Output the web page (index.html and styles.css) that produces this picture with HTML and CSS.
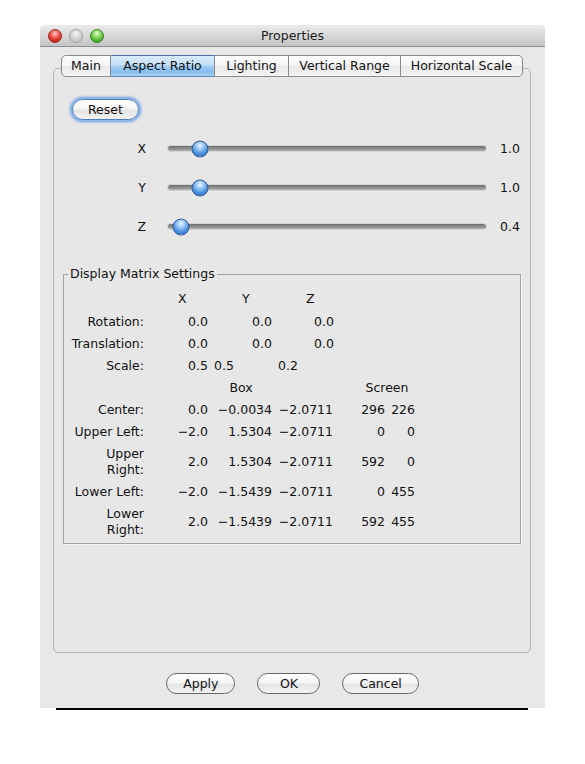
FILE: index.html
```html
<!DOCTYPE html>
<html>
<head>
<meta charset="utf-8">
<title>Properties</title>
<link rel="stylesheet" href="styles.css">
</head>
<body>
<div class="window">
  <div class="titlebar">
    <div class="lights">
      <span class="light red"></span><span class="light gray"></span><span class="light green"></span>
    </div>
    <div class="title">Properties</div>
    <div></div>
  </div>
  <div class="content">
    <div class="tabs">
      <div class="tab t-main">Main</div>
      <div class="tab t-aspect selected">Aspect Ratio</div>
      <div class="tab t-light">Lighting</div>
      <div class="tab t-vert">Vertical Range</div>
      <div class="tab t-horiz">Horizontal Scale</div>
    </div>
    <div class="panel">
      <button class="btn reset">Reset</button>
      <div class="sliders">
        <div class="slabel">X</div>
        <div class="track"><span class="thumb" style="left:10.1%"></span></div>
        <div class="sval">1.0</div>
        <div class="slabel">Y</div>
        <div class="track"><span class="thumb" style="left:10.1%"></span></div>
        <div class="sval">1.0</div>
        <div class="slabel">Z</div>
        <div class="track"><span class="thumb" style="left:4.1%"></span></div>
        <div class="sval">0.4</div>
      </div>
      <fieldset class="group">
        <legend>Display Matrix Settings</legend>
        <div class="matrix">
          <span class="first"></span><span class="h first">X</span><span class="h first">Y</span><span class="h first">Z</span>
          <span class="lbl">Rotation:</span><span class="v">0.0</span><span class="v">0.0</span><span class="v v3">0.0</span>
          <span class="lbl">Translation:</span><span class="v">0.0</span><span class="v">0.0</span><span class="v v3">0.0</span>
          <span class="lbl">Scale:</span><span class="v">0.5</span><span class="s">0.5</span><span class="s">0.2</span>
        </div>
        <div class="coords">
          <span></span><span class="hd box">Box</span><span class="hd screen">Screen</span>
          <span class="lbl">Center:</span><span>0.0</span><span>−0.0034</span><span>−2.0711</span><span>296</span><span>226</span>
          <span class="lbl">Upper Left:</span><span>−2.0</span><span>1.5304</span><span>−2.0711</span><span>0</span><span>0</span>
          <span class="lbl">Upper<br>Right:</span><span>2.0</span><span>1.5304</span><span>−2.0711</span><span>592</span><span>0</span>
          <span class="lbl">Lower Left:</span><span>−2.0</span><span>−1.5439</span><span>−2.0711</span><span>0</span><span>455</span>
          <span class="lbl">Lower<br>Right:</span><span>2.0</span><span>−1.5439</span><span>−2.0711</span><span>592</span><span>455</span>
        </div>
      </fieldset>
    </div>
  </div>
  <div class="buttonbar">
    <button class="btn">Apply</button>
    <button class="btn">OK</button>
    <button class="btn">Cancel</button>
  </div>
</div>
<div class="rule"></div>
</body>
</html>
```
FILE: styles.css
```css
* { box-sizing: border-box; }
html, body { margin: 0; padding: 0; background: #fff; }
body {
  font-family: "DejaVu Sans", sans-serif;
  font-size: 12.5px;
  color: #111;
}

.window {
  margin: 25px 0 0 40px;
  width: 505px;
  background: #e8e8e8;
  border-radius: 5px 5px 0 0;
}

.titlebar {
  height: 22px;
  display: grid;
  grid-template-columns: 1fr auto 1fr;
  align-items: center;
  background: linear-gradient(#ebebeb, #d6d6d6 55%, #c4c4c4);
  border-bottom: 1px solid #8e8e8e;
  border-radius: 5px 5px 0 0;
}
.lights { display: flex; gap: 7px; padding-left: 8px; }
.light {
  width: 14px; height: 14px; border-radius: 50%;
}
.red {
  background: radial-gradient(circle at 50% 30%, #ffd0c8 0, #f0685c 35%, #d3271b 70%, #a71a10 100%);
  border: 1px solid #9c2a20;
}
.gray {
  background: radial-gradient(circle at 50% 30%, #f6f6f6 0, #d8d8d8 40%, #b9b9b9 100%);
  border: 1px solid #a3a3a3;
}
.green {
  background: radial-gradient(circle at 50% 30%, #e2ffd2 0, #8bdc68 35%, #4fae2f 70%, #3b8c20 100%);
  border: 1px solid #3e8528;
}
.title { text-align: center; line-height: 16px; color: #1a1a1a; }

.content { padding: 8px 14px 12px 13px; }

.tabs {
  display: flex;
  justify-content: center;
  position: relative;
  z-index: 1;
  height: 22px;
}
.tab {
  height: 22px;
  line-height: 20px;
  text-align: center;
  border: 1px solid #8a8a8a;
  border-left: none;
  background: linear-gradient(#fdfdfd, #f4f4f4 50%, #e9e9e9 52%, #f4f4f4);
  white-space: nowrap;
}
.t-main { width: 50px; border-left: 1px solid #8a8a8a; border-radius: 5px 0 0 5px; }
.t-aspect { width: 104px; }
.t-light { width: 74px; }
.t-vert { width: 112px; }
.t-horiz { width: 122px; border-radius: 0 5px 5px 0; }
.tab.selected {
  background: linear-gradient(#d9ebfb, #c3dff8 45%, #a3cdf3 52%, #86bdee 80%, #a9d3f6);
  border-top-color: #4a6fa5;
  border-bottom-color: #6384b0;
}

.panel {
  margin-top: -9px;
  height: 585px;
  border: 1px solid #b5b5b5;
  border-radius: 5px;
  background: #e7e7e7;
  padding: 28px 9px 0;
}

.btn {
  display: block;
  font: inherit;
  color: #111;
  height: 21px;
  padding: 0 16px;
  min-width: 63px;
  border: 1px solid #676767;
  border-radius: 11px;
  background: linear-gradient(#ffffff, #f5f5f5 48%, #e4e4e4 52%, #f2f2f2);
  line-height: 18px;
}
.reset {
  margin: 2px 0 0 9px;
  padding: 0 15px;
  border-color: #4f7fbe;
  box-shadow: 0 0 0 2px #8fb8e8, 0 0 2px 3px rgba(110, 160, 225, 0.45);
}

.sliders {
  display: grid;
  grid-template-columns: 83px 340px auto;
  grid-auto-rows: 39px;
  align-items: center;
  margin-top: 9px;
}
.slabel { text-align: right; }
.track {
  position: relative;
  margin-left: 22px;
  height: 5px;
  border-radius: 3px;
  background: linear-gradient(#6e6e6e, #8c8c8c 50%, #b2b2b2);
  box-shadow: 0 0 0 1px rgba(0, 0, 0, 0.08);
}
.thumb {
  position: absolute;
  top: 50%;
  width: 17px;
  height: 17px;
  border-radius: 50%;
  transform: translate(-50%, -50%);
  background: radial-gradient(circle at 50% 28%, #eef6ff 0, #9ccaf6 28%, #4b8fe0 62%, #2461bd 100%);
  border: 1px solid #2f5b98;
}
.sval { padding-left: 14px; }

.group {
  margin: 20px 0 0;
  padding: 0 0 2px;
  border: 1px solid #a2a2a2;
  box-shadow: 1px 1px 0 #f7f7f7;
  min-width: 0;
}
.group legend {
  margin-left: 4px;
  padding: 0 2px;
  line-height: 16px;
}

.matrix {
  display: grid;
  grid-template-columns: 82px 64px 64px 64px;
  margin-top: 6px;
}
.matrix > span { padding: 3px 0; line-height: 16px; }
.matrix > .first { padding-bottom: 4px; }
.matrix .lbl { text-align: right; padding-right: 2px; }
.matrix .h { padding-left: 32px; }
.matrix .v { padding-left: 42px; }
.matrix .v3 { padding-left: 40px; }
.matrix .s { padding-left: 4px; }

.coords {
  display: grid;
  grid-template-columns: 82px 64px 64px 61px 52px 30px;
  align-items: center;
}
.coords > span {
  padding: 3px 2px 3px 0;
  line-height: 16px;
  text-align: right;
}
.coords .box { grid-column: 2 / 5; text-align: center; padding-left: 3px; }
.coords .screen { grid-column: 5 / 7; text-align: center; padding-left: 24px; }

.buttonbar {
  height: 43px;
  padding-top: 8px;
  display: flex;
  justify-content: center;
  gap: 22px;
}

.rule {
  margin-left: 56px;
  width: 472px;
  height: 2px;
  background: #000;
}
```
